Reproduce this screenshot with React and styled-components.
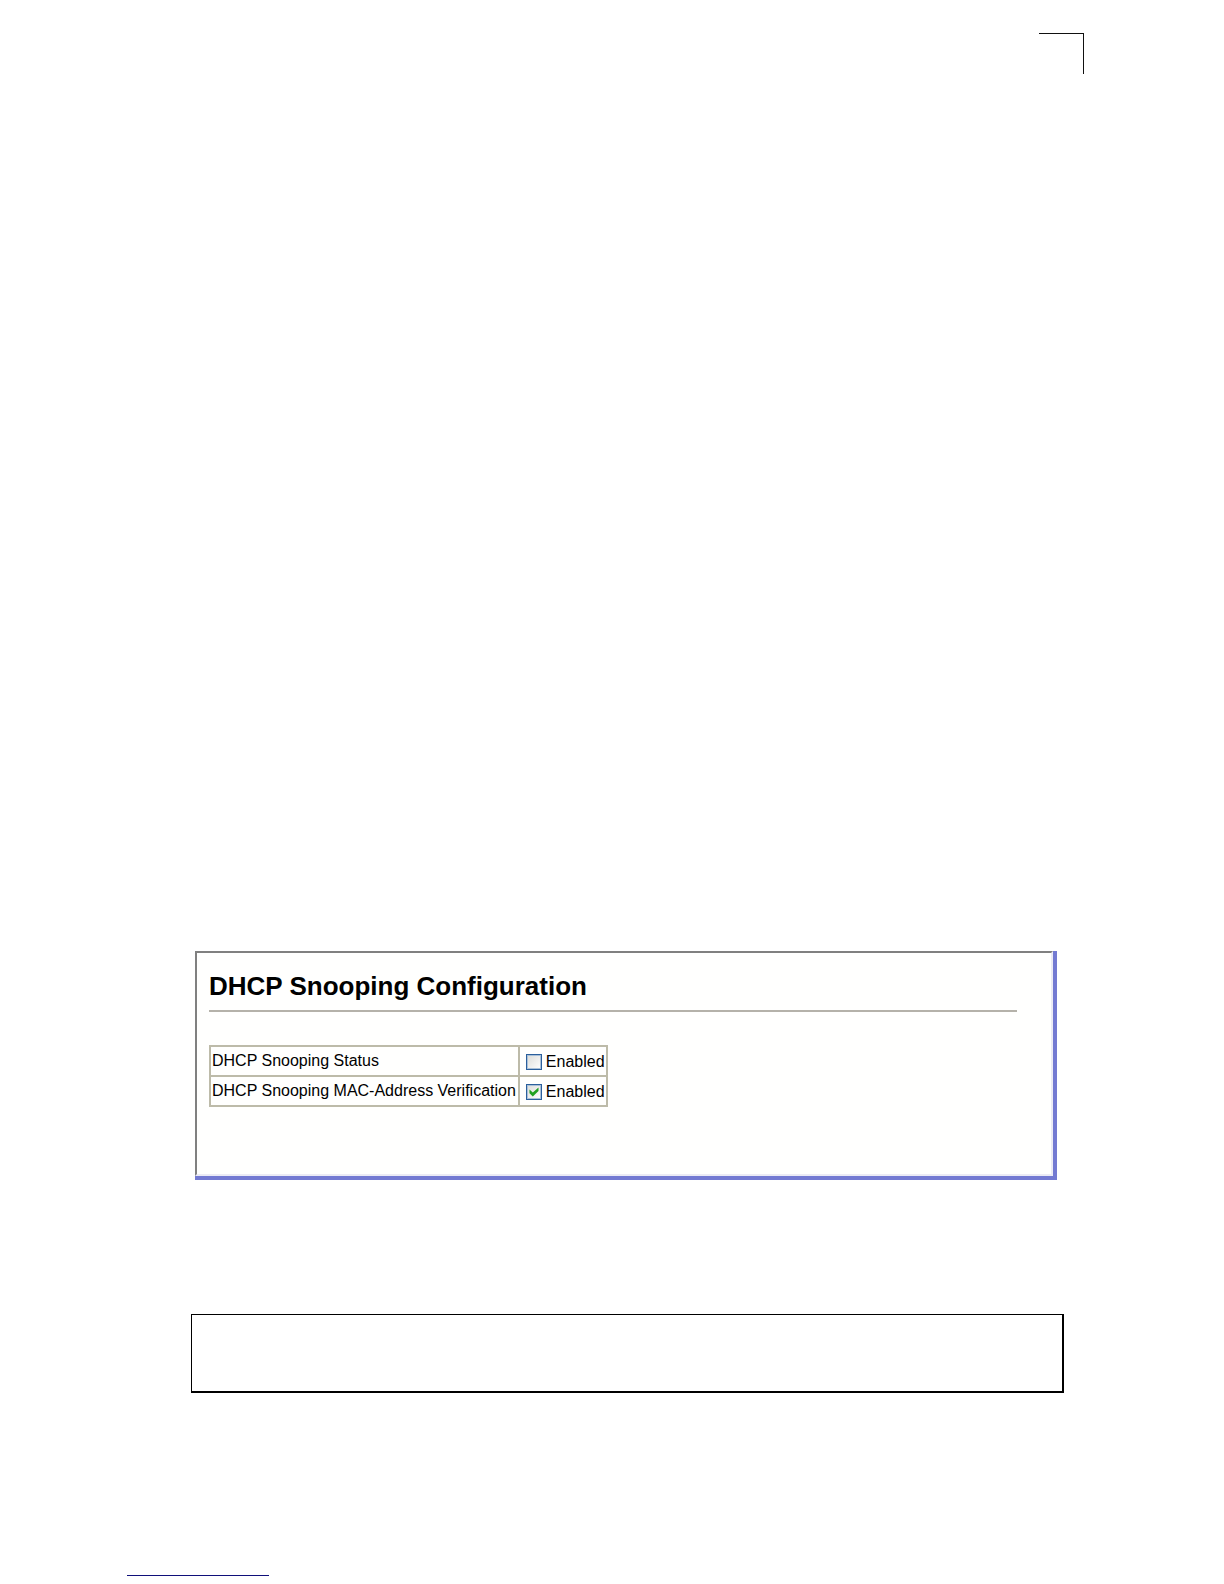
import React from 'react';

import styled, { createGlobalStyle } from 'styled-components';

const GlobalStyle = createGlobalStyle`
  * {
    box-sizing: border-box;
  }

  body {
    margin: 0;
    background: #fff;
    color: #000;
    font-family: 'Liberation Sans', Arial, sans-serif;
  }
`;

const Page = styled.div`
  display: flex;
  flex-direction: column;
  min-height: 100vh;
  padding: 33px 140px 8px 127px;
`;

const CornerMark = styled.div`
  align-self: flex-end;
  width: 45px;
  height: 41px;
  border-top: 1px solid #111;
  border-right: 1px solid #111;
`;

const Figure = styled.main`
  margin: 877px 27px 0 68px;
  border-right: 4px solid #737ad2;
  border-bottom: 4px solid #737ad2;
`;

const FigureFrame = styled.div`
  min-height: 225px;
  padding: 20px 34px 22px 12px;
  border: 2px solid #808080;
  border-right-color: #ebebf5;
  border-bottom-color: #ebebf5;
  background: #fffffe;
`;

const Title = styled.h1`
  margin: 0;
  padding: 0 0 11px;
  font-size: 26px;
  line-height: 26px;
  border-bottom: 2px solid #b5b2aa;
`;

const SettingsTable = styled.table`
  margin-top: 33px;
  border: 2px solid #bdbba9;
  border-collapse: collapse;
  font-size: 16px;
  line-height: 20px;
`;

const LabelCell = styled.th`
  height: 30px;
  padding: 0 2px 0 1px;
  border: 2px solid #bdbba9;
  font-weight: normal;
  text-align: left;
  white-space: nowrap;
`;

const ValueCell = styled.td`
  padding: 0 1px 0 6px;
  border: 2px solid #bdbba9;
`;

const CheckLabel = styled.label`
  display: flex;
  align-items: center;
  gap: 4px;
  padding-top: 1px;
`;

const CheckBox = styled.span`
  display: grid;
  width: 16px;
  height: 16px;

  > * {
    grid-area: 1 / 1;
  }
`;

const CheckInput = styled.input`
  appearance: none;
  width: 16px;
  height: 16px;
  margin: 0;
  border: 1px solid #2b5f9c;
  background: linear-gradient(135deg, #dcdcd8, #fff);
  box-shadow: inset 0 0 0 1px #a9c0d8;

  &:not(:checked) + svg {
    visibility: hidden;
  }
`;

const CheckMark = styled.svg`
  width: 16px;
  height: 16px;
  pointer-events: none;
`;

const NoteBox = styled.section`
  height: 79px;
  margin: 134px 20px 0 64px;
  border: solid #000;
  border-width: 1px 2px 2px 1px;
`;

const FooterRule = styled.hr`
  width: 142px;
  height: 1px;
  margin: auto 0 0;
  border: 0;
  background: #10107a;
`;

const settings = [
  { id: 'status', label: 'DHCP Snooping Status', enabled: false },
  {
    id: 'mac-verification',
    label: 'DHCP Snooping MAC-Address Verification',
    enabled: true,
  },
];

function EnabledField({ id, enabled }) {
  return (
    <CheckLabel htmlFor={id}>
      <CheckBox>
        <CheckInput
          id={id}
          type="checkbox"
          defaultChecked={enabled}
          aria-describedby={`${id}-label`}
        />
        <CheckMark viewBox="0 0 16 16" aria-hidden="true">
          <path d="M3.5 5.5 L6.8 8.6 L12.5 3.5 V7 L6.8 12.5 L3.5 9.2 Z" fill="#21a121" />
        </CheckMark>
      </CheckBox>
      Enabled
    </CheckLabel>
  );
}

export default function App() {
  return (
    <>
      <GlobalStyle />
      <Page>
        <CornerMark />
        <Figure>
          <FigureFrame>
            <Title>DHCP Snooping Configuration</Title>
            <SettingsTable>
              <tbody>
                {settings.map(({ id, label, enabled }) => (
                  <tr key={id}>
                    <LabelCell scope="row" id={`${id}-label`}>
                      {label}
                    </LabelCell>
                    <ValueCell>
                      <EnabledField id={id} enabled={enabled} />
                    </ValueCell>
                  </tr>
                ))}
              </tbody>
            </SettingsTable>
          </FigureFrame>
        </Figure>
        <NoteBox />
        <FooterRule />
      </Page>
    </>
  );
}
